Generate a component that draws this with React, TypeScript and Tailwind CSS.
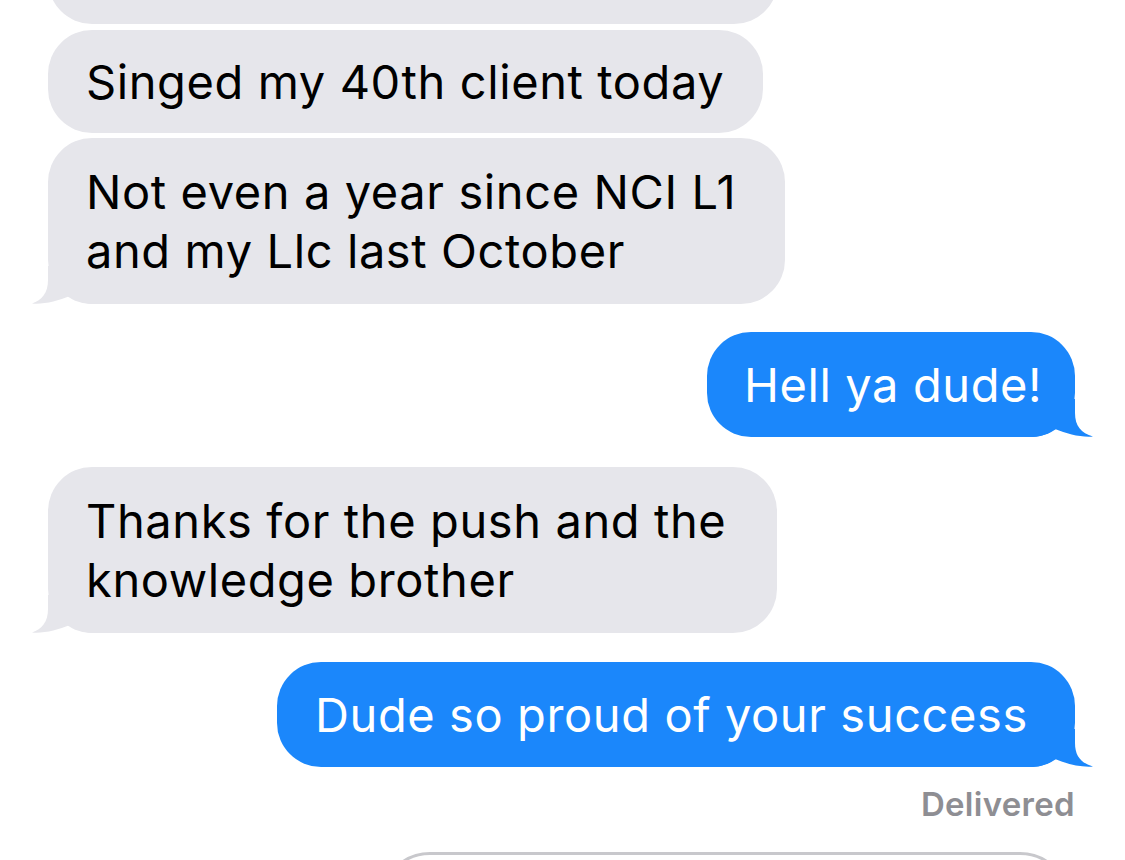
const GRAY = 'bg-[#e6e6eb]';
const BLUE = 'bg-[#1b87fb]';

function TailLeft() {
  return (
    <svg
      width="64"
      height="44"
      viewBox="0 0 64 44"
      className="absolute left-[-16px] bottom-0 fill-[#e6e6eb]"
    >
      <path d="M16,6 L16,20 C16,33 10,40 0,43.5 C12,44.5 26,41 38,36 C44,40 50,43.5 60,44 L64,44 L64,6 Z" />
    </svg>
  );
}

function TailRight() {
  return (
    <svg
      width="64"
      height="44"
      viewBox="0 0 64 44"
      className="absolute right-[-18px] bottom-0 fill-[#1b87fb]"
    >
      <path d="M46,6 L46,20 C46,33 52,40 64,43.5 C52,44.5 38,41 26,36 C20,40 14,43.5 4,44 L0,44 L0,6 Z" />
    </svg>
  );
}

export default function App() {
  return (
    <div
      className="h-[860px] w-[1125px] overflow-hidden whitespace-nowrap bg-white text-[47px] leading-[59px] tracking-[0.6px]"
      style={{ fontFamily: 'Inter, "Noto Sans", sans-serif' }}
    >
      <div className="flex flex-col pl-[48px] pr-[50px]">
        {/* cut-off bubble at the top */}
        <div className={`${GRAY} -mt-[76px] h-[100px] w-[730px] rounded-[44px]`} />

        <div className={`${GRAY} mt-[6px] w-[715px] rounded-[44px] px-[38px] py-[22px] text-black`}>
          Singed my 40th client today
        </div>

        <div className={`${GRAY} relative mt-[5px] w-[737px] rounded-[44px] px-[38px] py-[24px] text-black`}>
          <span className="relative z-10">
            Not even a year since NCI L1
            <br />
            and my Llc last October
          </span>
          <TailLeft />
        </div>

        <div className={`${BLUE} relative mt-[28px] w-[368px] self-end rounded-[44px] px-[37px] py-[23px] text-white`}>
          <span className="relative z-10">Hell ya dude!</span>
          <TailRight />
        </div>

        <div className={`${GRAY} relative mt-[30px] w-[729px] rounded-[44px] px-[38px] py-[24px] text-black`}>
          <span className="relative z-10">
            Thanks for the push and the
            <br />
            knowledge brother
          </span>
          <TailLeft />
        </div>

        <div className={`${BLUE} relative mt-[29px] w-[798px] self-end rounded-[44px] px-[38px] py-[23px] text-white`}>
          <span className="relative z-10">Dude so proud of your success</span>
          <TailRight />
        </div>

        <div className="mt-[17px] self-end text-[33px] leading-[40px] font-semibold tracking-[0.3px] text-[#8e8e93]">
          Delivered
        </div>

        {/* input field, only its top edge is on screen */}
        <div className="mt-[28px] ml-[332px] h-[100px] w-[690px] rounded-[50px] border-[3px] border-[#c8c8cc]" />
      </div>
    </div>
  );
}
